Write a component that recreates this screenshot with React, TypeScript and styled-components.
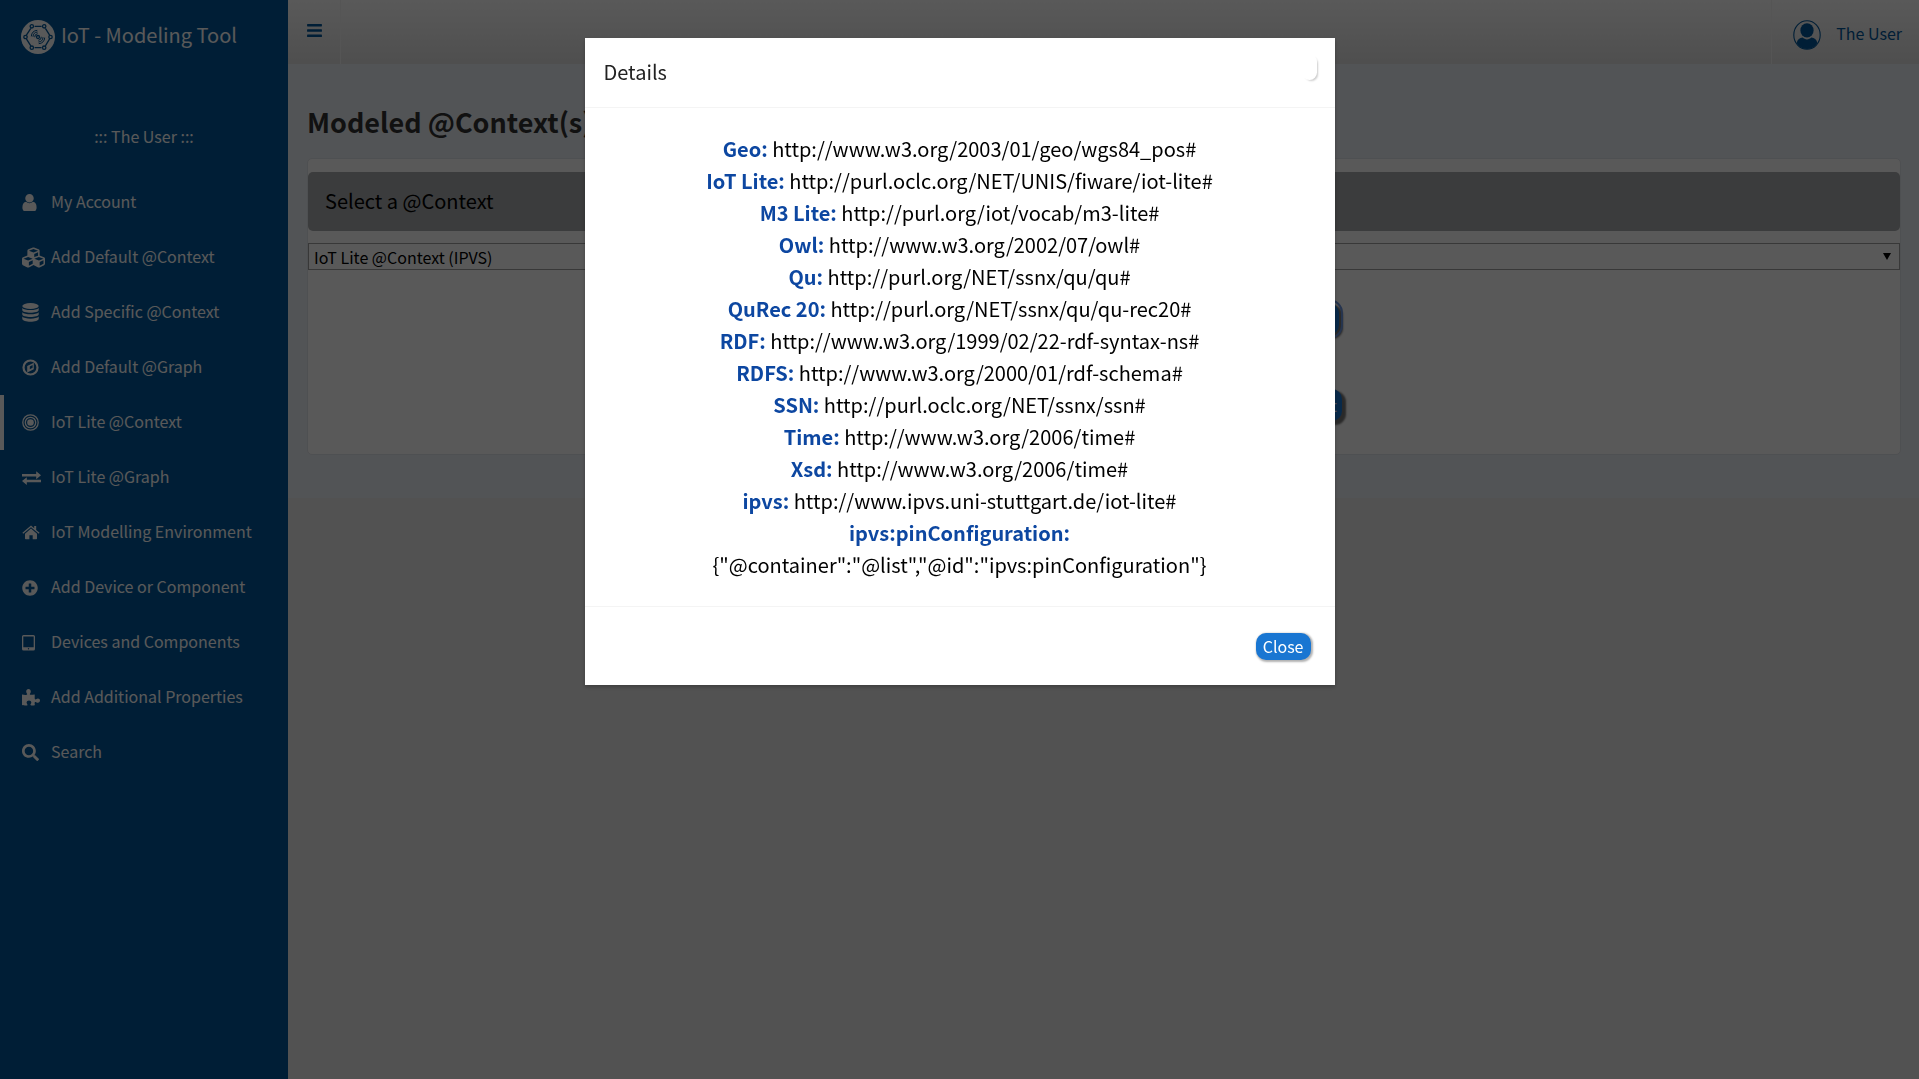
import React from "react";
import styled, { createGlobalStyle, css } from "styled-components";
import { FaCubes, FaPlusCircle, FaSearch, FaBars } from "react-icons/fa";

const navy = "#01579b";
const fontStack = `"Noto Sans CJK SC", "Noto Sans", sans-serif`;

const GlobalStyle = createGlobalStyle`
  *, *::before, *::after { box-sizing: border-box; }
  body {
    margin: 0;
    background: #eaeaea;
    color: #333;
    font-family: ${fontStack};
    font-size: 16px;
    line-height: 24px;
  }
  button, select { font-family: inherit; }
  h1, h2, p, ul, dl, dd { margin: 0; padding: 0; }
`;

const Shell = styled.div`
  display: flex;
  min-height: 100vh;
`;

const Sidebar = styled.aside`
  width: 288px;
  flex: none;
  background: ${navy};
  color: #fff;
`;

const Brand = styled.a`
  display: flex;
  align-items: center;
  gap: 6px;
  height: 64px;
  padding: 10px 21px 0;
  color: #fff;
  font-size: 20px;
  line-height: 32px;
  text-decoration: none;
  white-space: nowrap;

  span { padding-bottom: 4px; }
`;

const UserLine = styled.p`
  padding: 60px 0 27px;
  text-align: center;
`;

const Menu = styled.ul`
  list-style: none;
`;

const MenuLink = styled.a<{ $active?: boolean }>`
  display: flex;
  align-items: center;
  height: 55px;
  padding-left: 18px;
  border-left: 4px solid ${(p) => (p.$active ? "#fff" : "transparent")};
  color: #fff;
  text-decoration: none;
  white-space: nowrap;
`;

const IconSlot = styled.span`
  display: flex;
  align-items: center;
  width: 29px;
  flex: none;
`;

const MenuLabel = styled.span`
  padding-bottom: 4px;
`;

const Page = styled.div`
  flex: 1;
  min-width: 0;
`;

const TopBar = styled.header`
  display: flex;
  justify-content: space-between;
  height: 64px;
  background: linear-gradient(#fff, #e1e1e1);
`;

const MenuToggle = styled.button`
  width: 53px;
  height: 64px;
  padding: 0 18px 4px;
  border: 0;
  border-right: 1px solid #f4f4f4;
  background: none;
  color: ${navy};
  font-size: 17px;
  line-height: 0;
`;

const Account = styled.a`
  display: flex;
  align-items: center;
  gap: 15px;
  padding: 5px 17px 0 21px;
  border-left: 1px solid #f4f4f4;
  color: ${navy};
  text-decoration: none;

  span { padding-bottom: 4px; }
`;

const Content = styled.main`
  padding: 38px 18px 43px 19px;
  background: #ecf0f5;
`;

const PageTitle = styled.h1`
  padding-bottom: 16px;
  font-size: 27px;
  line-height: 40px;
  font-weight: 700;
`;

const Panel = styled.section`
  padding-top: 13px;
  border: 1px solid #dfe4ea;
  border-radius: 5px;
  background: #fff;
`;

const Banner = styled.label`
  display: block;
  padding: 13px 17px 15px;
  border-radius: 5px;
  background: #a9abae;
  color: #000;
  font-size: 20px;
  line-height: 31px;
`;

const SelectWrap = styled.div`
  position: relative;
  margin-top: 12px;
`;

const ContextSelect = styled.select`
  appearance: none;
  display: block;
  width: 100%;
  height: 27px;
  padding: 0 5px;
  border: 1px solid #a0a0a0;
  border-radius: 0;
  background: #fff;
  color: #000;
  font-size: 16px;
  line-height: 24px;
`;

const Caret = styled.span`
  position: absolute;
  top: 10px;
  right: 9px;
  border: solid transparent;
  border-width: 7px 4px 0;
  border-top-color: #000;
  pointer-events: none;
`;

const Actions = styled.div`
  display: grid;
  justify-items: center;
  gap: 54px;
  width: 74px;
  margin: 33px 35% 33px auto;
`;

const actionStyle = css`
  border: 0;
  border-radius: 10px;
  background: #1976d2;
  color: #fff;
`;

const Action = styled.button<{ $focused?: boolean }>`
  ${actionStyle}
  width: ${(p) => (p.$focused ? 66 : 72)}px;
  height: 32px;
  padding: 0 5px;
  font-size: 16px;
  line-height: 24px;
  text-align: right;
  box-shadow: 3px 3px 2px 1px #777;
  ${(p) =>
    p.$focused &&
    css`
      outline: 2px solid #6b94e0;
      outline-offset: 2px;
    `}
`;

const Backdrop = styled.div`
  position: fixed;
  inset: 0;
  display: flex;
  justify-content: center;
  align-items: flex-start;
  padding-top: 38px;
  background: rgba(0, 0, 0, 0.65);
`;

const Dialog = styled.div`
  width: 750px;
  max-width: 100%;
  background: #fff;
  box-shadow: 0 2px 4px rgba(0, 0, 0, 0.25);
`;

const DialogHeader = styled.header`
  display: flex;
  justify-content: space-between;
  align-items: flex-start;
  padding: 16px 18px 18px 19px;
  border-bottom: 1px solid #f4f4f4;
`;

const DialogTitle = styled.h2`
  color: #222;
  font-size: 20px;
  line-height: 35px;
  font-weight: 400;
`;

const Dismiss = styled.button`
  width: 15px;
  height: 26px;
  padding: 0;
  border: 0;
  border-radius: 10px;
  background: #fff;
  box-shadow: 2px 2px 2px -1px rgba(0, 0, 0, 0.2);
`;

const Vocabulary = styled.dl`
  width: 540px;
  max-width: 100%;
  margin: 0 auto;
  padding: 25px 0 25px;
  color: #000;
  font-size: 20px;
  line-height: 32px;
  text-align: center;
`;

const Prefix = styled.dt`
  display: inline;
  color: #0d47a1;
  font-weight: 700;
`;

const Uri = styled.dd`
  display: inline;
`;

const DialogFooter = styled.footer`
  display: flex;
  justify-content: flex-end;
  padding: 26px 24px 25px;
  border-top: 1px solid #f4f4f4;
`;

const CloseButton = styled.button`
  ${actionStyle}
  height: 27px;
  padding: 0 7px 2px;
  font-size: 16px;
  line-height: 24px;
  box-shadow: 1px 1px 2px 1px rgba(0, 0, 0, 0.3);
`;

const UserIcon = () => (
  <svg width="15" height="17" viewBox="0 0 1280 1536" fill="currentColor" aria-hidden="true">
    <path d="M1280 1271q0 109-62.500 187t-150.500 78H213q-88 0-150.500-78T0 1271q0-85 8.500-160.500t31.500-152 58.500-131 94-89T327 704q131 128 313 128t313-128q76 0 134.500 34.500t94 89 58.500 131 31.500 152 8.500 160.500zM1024 384q0 159-112.500 271.500T640 768 368.500 655.500 256 384t112.500-271.500T640 0t271.500 112.500T1024 384z" />
  </svg>
);

const DatabaseIcon = () => (
  <svg width="17" height="19" viewBox="0 0 17 19" fill="currentColor" aria-hidden="true">
    <ellipse cx="8.500" cy="3" rx="8.200" ry="3" />
    <path d="M.3 5c2 2.700 14.400 2.700 16.400 0v2c0 3.600-16.400 3.600-16.400 0zM.3 9.300c2 2.700 14.400 2.700 16.400 0v2c0 3.600-16.400 3.600-16.400 0zM.3 13.600c2 2.700 14.400 2.700 16.400 0v2.200c0 4-16.400 4-16.400 0z" />
  </svg>
);

const CompassIcon = () => (
  <svg width="17" height="17" viewBox="0 0 17 17" aria-hidden="true">
    <circle cx="8.500" cy="8.500" r="7" fill="none" stroke="currentColor" strokeWidth="2.200" />
    <path fill="currentColor" fillRule="evenodd" d="M11.800 3.800v6.400l-6.600 3.200V7zM10.600 6L7.800 7.400v2.800l2.800-1.400z" />
  </svg>
);

const BullseyeIcon = () => (
  <svg width="17" height="17" viewBox="0 0 17 17" aria-hidden="true">
    <g fill="none" stroke="currentColor" strokeWidth="1.300">
      <circle cx="8.500" cy="8.500" r="7.700" />
      <circle cx="8.500" cy="8.500" r="5.200" />
    </g>
    <circle cx="8.500" cy="8.500" r="3.300" fill="currentColor" />
  </svg>
);

const ExchangeIcon = () => (
  <svg width="19" height="14" viewBox="0 0 19 14" fill="currentColor" aria-hidden="true">
    <path d="M0 2.900h14.200V.2L19 4.200l-4.800 4V5.500H0zM19 8.700H4.800V6.200L0 10l4.800 4v-2.700H19z" />
  </svg>
);

const HomeIcon = () => (
  <svg width="18" height="15" viewBox="0 0 18 15" fill="currentColor" aria-hidden="true">
    <path d="M9 3.600l6 5.200V13.500q0 .7-.7.700h-3.600v-4H7.400v4H3.700q-.7 0-.7-.7V8.800z" />
    <path d="M9 .5l3.200 2.700V1h2v3.900L17.600 7.700l-.8 1L9 2.300 1.200 8.700l-.8-1z" />
  </svg>
);

const TabletIcon = () => (
  <svg width="13" height="16" viewBox="0 0 13 16" aria-hidden="true">
    <path
      fill="currentColor"
      fillRule="evenodd"
      d="M1.600 0h9.800Q13 0 13 1.600v12.300q0 1.600-1.600 1.600H1.600Q0 15.500 0 13.900V1.600Q0 0 1.600 0zM1.300 1.500v10.800h10.400V1.500zM6.500 13.100a.7.700 0 1 0 0 1.400.7.700 0 0 0 0-1.400z"
    />
  </svg>
);

const PuzzleIcon = () => (
  <svg width="18" height="17" viewBox="0 0 18 17" fill="currentColor" aria-hidden="true">
    <path d="M0 5.500c2 .4 5.200.7 5.200-.3 0-.7-1-1.300-1-2.800C4.200 1 5.100 0 6.500 0s2.300 1 2.300 2.400c0 1.500-1 2.100-1 2.800 0 1.200 3.600.4 4.900.2v3.400c0 1 .2 1.700.9 1.700s1.100-1 2.300-1c1.300 0 2.100.9 2.100 2.100s-.8 2.200-2.200 2.200c-1.200 0-1.600-.8-2.300-.8-1.300 0-.8 2-.6 3.200-1.200.2-4.500.8-4.500-.4 0-.8.9-1.200.9-2.400 0-1.300-1-2-2.300-2s-2.400.8-2.400 2c0 1.200.9 1.600.9 2.500 0 1.300-4 .4-5.500.2z" />
  </svg>
);

const menu: { label: string; icon: React.ReactNode; active?: boolean }[] = [
  { label: "My Account", icon: <UserIcon /> },
  { label: "Add Default @Context", icon: <FaCubes size={23} /> },
  { label: "Add Specific @Context", icon: <DatabaseIcon /> },
  { label: "Add Default @Graph", icon: <CompassIcon /> },
  { label: "IoT Lite @Context", icon: <BullseyeIcon />, active: true },
  { label: "IoT Lite @Graph", icon: <ExchangeIcon /> },
  { label: "IoT Modelling Environment", icon: <HomeIcon /> },
  { label: "Add Device or Component", icon: <FaPlusCircle size={16} /> },
  { label: "Devices and Components", icon: <TabletIcon /> },
  { label: "Add Additional Properties", icon: <PuzzleIcon /> },
  { label: "Search", icon: <FaSearch size={17} /> },
];

const vocabulary: [string, string][] = [
  ["Geo:", "http://www.w3.org/2003/01/geo/wgs84_pos#"],
  ["IoT Lite:", "http://purl.oclc.org/NET/UNIS/fiware/iot-lite#"],
  ["M3 Lite:", "http://purl.org/iot/vocab/m3-lite#"],
  ["Owl:", "http://www.w3.org/2002/07/owl#"],
  ["Qu:", "http://purl.org/NET/ssnx/qu/qu#"],
  ["QuRec 20:", "http://purl.org/NET/ssnx/qu/qu-rec20#"],
  ["RDF:", "http://www.w3.org/1999/02/22-rdf-syntax-ns#"],
  ["RDFS:", "http://www.w3.org/2000/01/rdf-schema#"],
  ["SSN:", "http://purl.oclc.org/NET/ssnx/ssn#"],
  ["Time:", "http://www.w3.org/2006/time#"],
  ["Xsd:", "http://www.w3.org/2006/time#"],
  ["ipvs:", "http://www.ipvs.uni-stuttgart.de/iot-lite#"],
  ["ipvs:pinConfiguration:", '{"@container":"@list","@id":"ipvs:pinConfiguration"}'],
];

const Logo = () => (
  <svg width="34" height="34" viewBox="0 0 34 34" aria-hidden="true">
    <circle cx="17" cy="17" r="17" fill="#fff" />
    <g fill="none" stroke={navy} strokeWidth="1.300">
      <path d="M13.600 6.300h7M13.600 27.700h7M9.800 8.400L5.400 15.200M24.400 8.400l4.200 6.800M9.800 25.800L5.400 18.900M24.400 25.800l4.200-6.900" />
      <circle cx="10.800" cy="6.300" r="1.700" />
      <circle cx="23.200" cy="6.300" r="1.700" />
      <circle cx="4.500" cy="17" r="1.700" />
      <circle cx="29.500" cy="17" r="1.700" />
      <circle cx="10.800" cy="27.700" r="1.700" />
      <circle cx="23.200" cy="27.700" r="1.700" />
      <circle cx="17" cy="17" r="1.500" />
      <path
        strokeWidth="1"
        d="M13.700 17.200a3.400 3.400 0 0 1 3-3.500M12 16.800a5 5 0 0 1 4.600-4.800M10.300 16.400a6.600 6.600 0 0 1 6-6.100M20.300 16.800a3.400 3.400 0 0 1-3 3.500M22 17.200a5 5 0 0 1-4.600 4.800M23.700 17.600a6.600 6.600 0 0 1-6 6.100"
      />
    </g>
  </svg>
);

const Avatar = () => (
  <svg width="28" height="30" viewBox="0 0 28 30" aria-hidden="true">
    <ellipse cx="14" cy="15" rx="13.200" ry="14.200" fill="none" stroke={navy} strokeWidth="1.100" />
    <ellipse cx="14" cy="10.400" rx="6.600" ry="7.200" fill={navy} />
    <path d="M3.600 23c1-3.600 3-4.800 6-5.400 2.400 2.400 6.400 2.400 8.800 0 3 .6 5 1.800 6 5.400-2.400 4-6.200 6-10.400 6S6 27 3.600 23z" fill={navy} />
  </svg>
);

export default function App() {
  return (
    <>
      <GlobalStyle />
      <Shell>
        <Sidebar>
          <Brand href="#">
            <Logo />
            <span>IoT - Modeling Tool</span>
          </Brand>
          <UserLine>::: The User :::</UserLine>
          <nav>
            <Menu>
              {menu.map((item) => (
                <li key={item.label}>
                  <MenuLink href="#" $active={item.active}>
                    <IconSlot>{item.icon}</IconSlot>
                    <MenuLabel>{item.label}</MenuLabel>
                  </MenuLink>
                </li>
              ))}
            </Menu>
          </nav>
        </Sidebar>
        <Page>
          <TopBar>
            <MenuToggle aria-label="Toggle navigation">
              <FaBars />
            </MenuToggle>
            <Account href="#">
              <Avatar />
              <span>The User</span>
            </Account>
          </TopBar>
          <Content>
            <PageTitle>Modeled @Context(s)</PageTitle>
            <Panel>
              <Banner htmlFor="context">Select a @Context</Banner>
              <SelectWrap>
                <ContextSelect id="context">
                  <option>IoT Lite @Context (IPVS)</option>
                </ContextSelect>
                <Caret />
              </SelectWrap>
              <Actions>
                <Action $focused aria-label="Details" />
                <Action>Select</Action>
              </Actions>
            </Panel>
          </Content>
        </Page>
      </Shell>
      <Backdrop>
        <Dialog role="dialog" aria-modal="true" aria-labelledby="dialog-title">
          <DialogHeader>
            <DialogTitle id="dialog-title">Details</DialogTitle>
            <Dismiss aria-label="Dismiss" />
          </DialogHeader>
          <Vocabulary>
            {vocabulary.map(([prefix, uri]) => (
              <div key={prefix}>
                <Prefix>{prefix}</Prefix> <Uri>{uri}</Uri>
              </div>
            ))}
          </Vocabulary>
          <DialogFooter>
            <CloseButton>Close</CloseButton>
          </DialogFooter>
        </Dialog>
      </Backdrop>
    </>
  );
}
